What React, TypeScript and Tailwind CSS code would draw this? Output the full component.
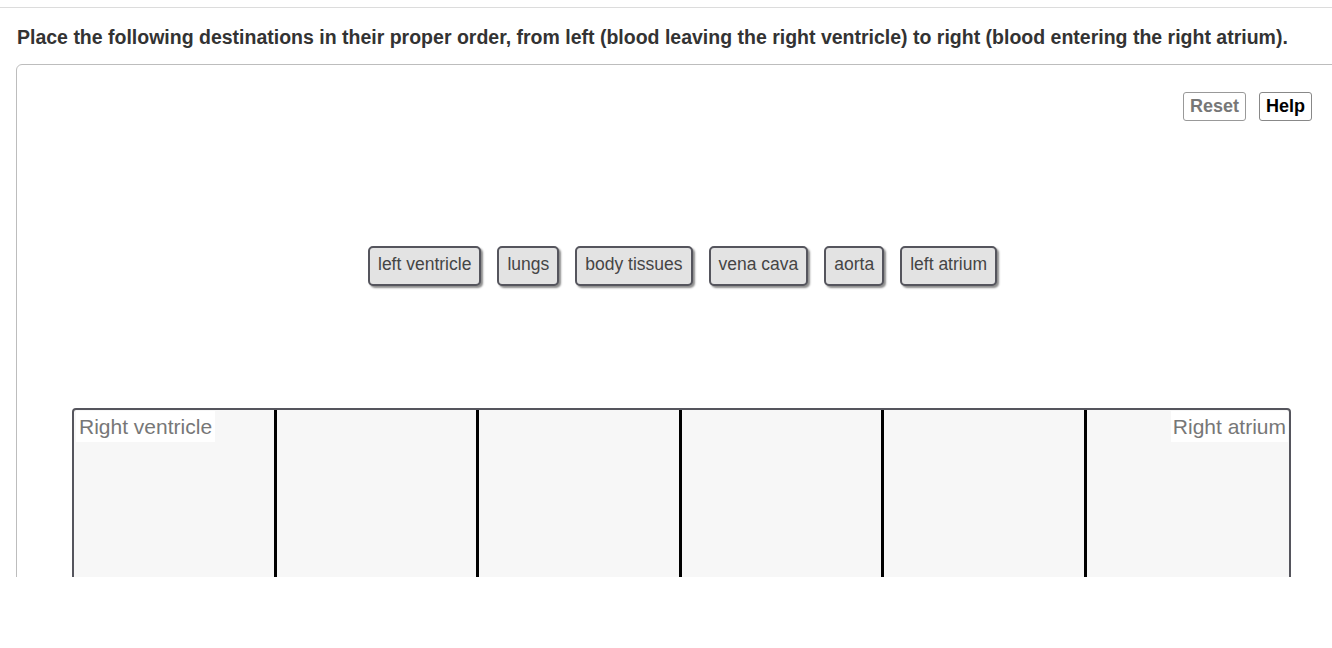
import React from "react";

const tiles = ["left ventricle", "lungs", "body tissues", "vena cava", "aorta", "left atrium"];

const Tile: React.FC<{ label: string }> = ({ label }) => (
  <div className="h-[40px] px-[8px] pb-[3px] flex items-center rounded-[5px] border-2 border-[#55555d] bg-[#e3e3e3] text-[17.5px] text-[#454545] shadow-[2px_2px_2px_rgba(0,0,0,0.45)]">
    {label}
  </div>
);

export default function App() {
  return (
    <div className="w-[1332px] h-[648px] bg-white overflow-hidden font-['Liberation_Sans',Arial,sans-serif]">
      <div className="h-[577px] overflow-hidden">
        <div className="h-[8px] border-b border-[#dcdcdc]" />
        <h1 className="mt-[17px] ml-[17px] text-[19.5px] leading-[24px] font-bold text-[#333] whitespace-nowrap">
          Place the following destinations in their proper order, from left (blood leaving the right ventricle) to right (blood entering the right atrium).
        </h1>
        <div className="mt-[15px] ml-[16px] w-[1320px] h-[600px] border border-[#bdbdbd] rounded-tl-[6px] pl-[55px] pr-[23px] pt-[27px]">
          <div className="flex justify-end gap-[13px]">
            <button className="h-[29px] w-[63px] border border-[#999] rounded-[3px] text-[18px] font-bold text-[#777]">
              Reset
            </button>
            <button className="h-[29px] w-[53px] border border-[#888] rounded-[3px] text-[18px] font-bold text-black">
              Help
            </button>
          </div>
          <div className="mt-[125px] flex gap-[16px] pl-[296px]">
            {tiles.map((t) => (
              <Tile key={t} label={t} />
            ))}
          </div>
          <div className="mt-[122px] w-[1219px] h-[200px] border-2 border-[#55555d] rounded-t-[4px] bg-[#f7f7f7] grid grid-cols-6">
            {[0, 1, 2, 3, 4, 5].map((i) => (
              <div key={i} className={i === 5 ? "relative" : "relative border-r-[3px] border-black"}>
                {i === 0 && (
                  <span className="absolute left-[2px] top-[1px] bg-white px-[3px] text-[21px] leading-[31px] text-[#777]">
                    Right ventricle
                  </span>
                )}
                {i === 5 && (
                  <span className="absolute right-[1px] top-[1px] bg-white px-[2px] text-[21px] leading-[31px] text-[#777]">
                    Right atrium
                  </span>
                )}
              </div>
            ))}
          </div>
        </div>
      </div>
    </div>
  );
}
